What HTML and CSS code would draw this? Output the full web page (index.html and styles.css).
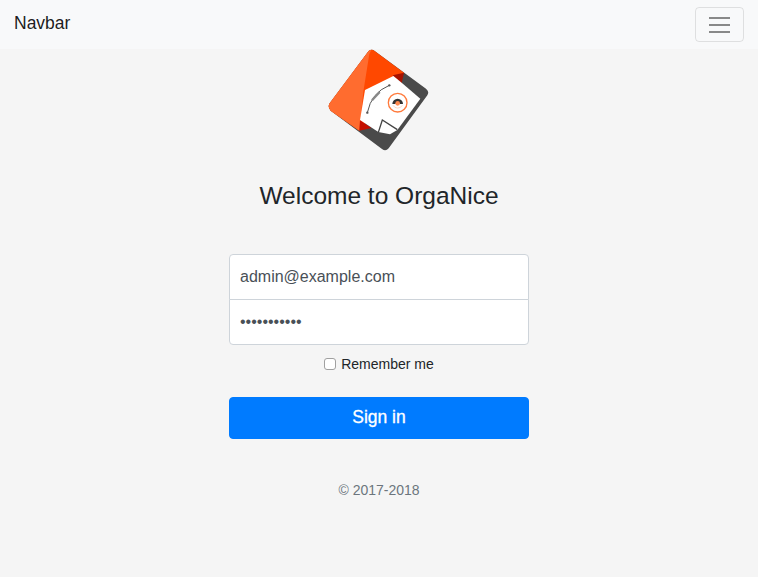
FILE: index.html
```html
<!DOCTYPE html>
<html lang="en">
<head>
<meta charset="utf-8">
<title>OrgaNice</title>
<link rel="stylesheet" href="styles.css">
</head>
<body>
<nav class="navbar">
  <a class="brand" href="#">Navbar</a>
  <button class="toggler" type="button" aria-label="Toggle navigation">
    <span class="bar"></span><span class="bar"></span><span class="bar"></span>
  </button>
</nav>
<main class="signin">
  <svg class="logo" viewBox="54 27 306 306" width="102" height="102" aria-label="OrgaNice logo">
    <path d="M176 33 Q185 26 194 33 L348 146 Q359 155 352 166 L236 325 Q227 335 216 327 L62 212 Q52 201 59 190 Z" fill="#4a4a4a"/>
    <path d="M176 33 Q185 26 194 33 L282 98 L148 272 L62 212 Q52 201 59 190 Z" fill="#ff4800"/>
    <path d="M176 33 Q180 30 184 30 L178 42 L160 155 L148 272 L62 212 Q52 201 59 190 Z" fill="#ff6c2f"/>
    <path d="M248 106 L282 98 L275 130 Z" fill="#a81200"/>
    <path d="M150 240 L184 264 L148 272 Z" fill="#c41000"/>
    <path d="M165 150 L250 108 L275 128 L331 176 L262 270 L240 283 L205 276 L150 240 Z" fill="#fff"/>
    <path d="M205 277 L217 240 L262 269" fill="none" stroke="#444" stroke-width="4"/>
    <path d="M238 136 Q184 158 172 218" fill="none" stroke="#555" stroke-width="3"/>
    <circle cx="238" cy="136" r="3.5" fill="#555"/>
    <circle cx="172" cy="218" r="3.5" fill="#555"/>
    <path d="M186 181 L209 156" fill="none" stroke="#888" stroke-width="7"/>
    <circle cx="263" cy="188" r="28" fill="none" stroke="#ff7a3c" stroke-width="4"/>
    <path d="M247 192 A16 16 0 0 1 279 192 L271 192 L255 192 Z" fill="#333"/>
    <circle cx="263" cy="190" r="7" fill="#ff8a50"/>
    <path d="M249 196 A16 16 0 0 0 277 196" fill="none" stroke="#ffc4a6" stroke-width="2"/>
  </svg>
  <h1 class="title">Welcome to OrgaNice</h1>
  <form class="form">
    <input class="field field-top" type="email" value="admin@example.com" aria-label="Email">
    <input class="field field-bottom" type="password" value="password123" aria-label="Password">
    <label class="remember"><input class="check" type="checkbox">Remember me</label>
    <button class="submit" type="button">Sign in</button>
  </form>
  <p class="copy">© 2017-2018</p>
</main>
</body>
</html>
```
FILE: styles.css
```css
* { box-sizing: border-box; }
html, body { margin: 0; height: 100%; }
body {
  background: #f5f5f5;
  color: #212529;
  font-family: "Liberation Sans", Arial, sans-serif;
  font-size: 14px;
}
.navbar {
  display: flex;
  justify-content: space-between;
  align-items: center;
  height: 49px;
  padding: 0 14px;
  background: #f8f9fa;
}
.brand { padding-bottom: 2px; font-size: 17.5px; color: rgba(0,0,0,.9); text-decoration: none; }
.toggler {
  display: flex;
  flex-direction: column;
  justify-content: center;
  gap: 5px;
  width: 49px;
  height: 35px;
  padding: 0 13px;
  background: transparent;
  border: 1px solid rgba(0,0,0,.1);
  border-radius: 4px;
}
.bar { display: block; height: 2px; background: rgba(0,0,0,.45); }
.signin { display: flex; flex-direction: column; align-items: center; }
.logo { display: block; }
.title {
  margin: 30px 0 0;
  font-size: 24.5px;
  line-height: 29px;
  font-weight: 400;
}
.form { display: flex; flex-direction: column; width: 300px; margin-top: 44px; }
.field {
  display: block;
  width: 100%;
  height: 46px;
  padding: 0 10px;
  font: 16px "Liberation Sans", Arial, sans-serif;
  color: #495057;
  background: #fff;
  border: 1px solid #ced4da;
}
.field-top { border-radius: 4px 4px 0 0; }
.field-bottom { border-radius: 0 0 4px 4px; margin-top: -1px; }
.remember {
  display: flex;
  align-items: center;
  justify-content: center;
  height: 16px;
  margin-top: 11px;
  font-size: 14px;
}
.check {
  appearance: none;
  width: 12px;
  height: 12px;
  margin: 0 5px 0 0;
  background: #fff;
  border: 1px solid #a0a0a0;
  border-radius: 3px;
}
.submit {
  height: 42px;
  margin-top: 25px;
  padding: 0 0 2px;
  font: 17.5px "Liberation Sans", Arial, sans-serif;
  -webkit-text-stroke: 0.3px #fff;
  color: #fff;
  background: #007bff;
  border: 1px solid #007bff;
  border-radius: 4px;
}
.copy { margin: 43px 0 0; font-size: 14px; line-height: 17px; color: #6c757d; }
```
